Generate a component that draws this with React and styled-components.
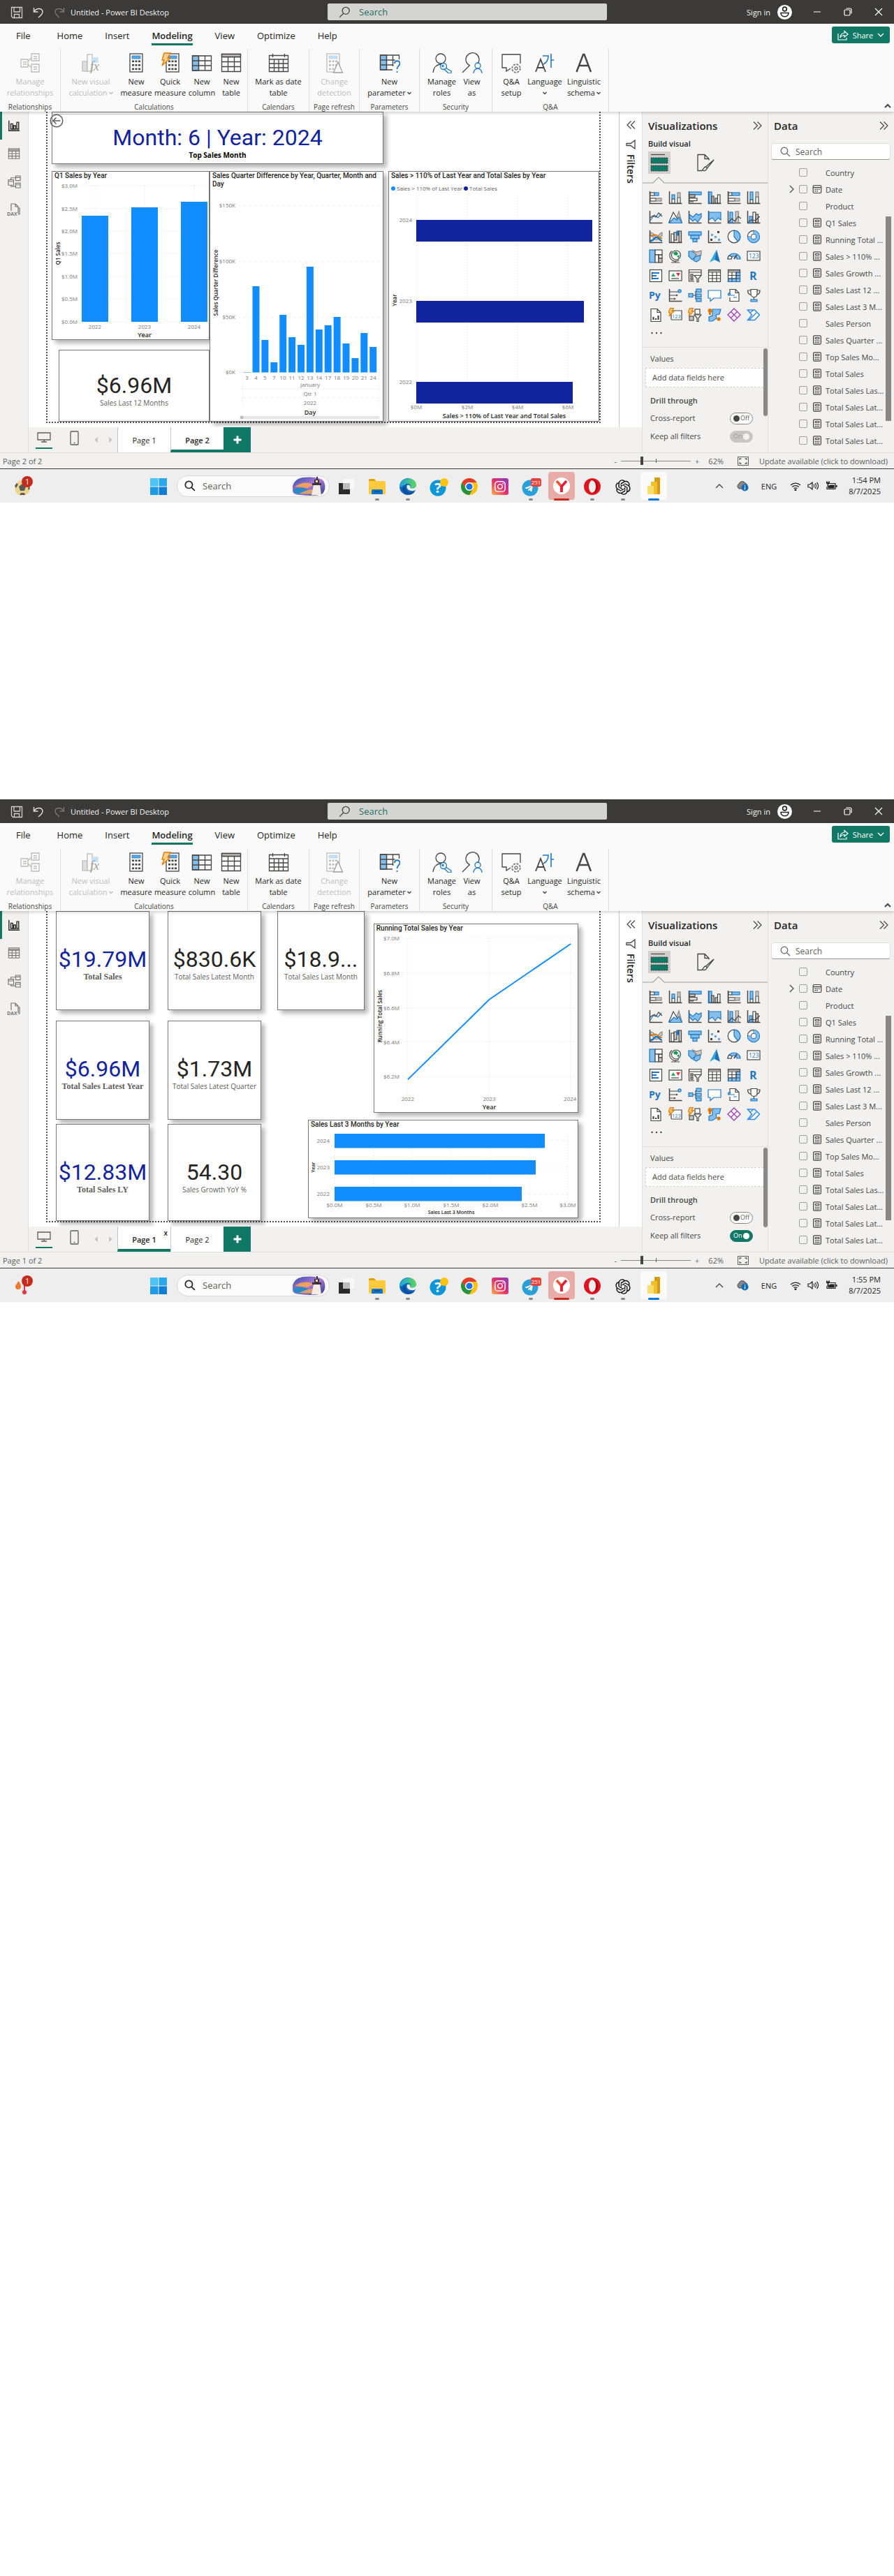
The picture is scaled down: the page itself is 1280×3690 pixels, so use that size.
import React from 'react';
import styled, { createGlobalStyle, css } from 'styled-components';
import { RiOpenaiFill } from 'react-icons/ri';
import { FaInstagram, FaTelegramPlane } from 'react-icons/fa';

/* ---------- tokens ---------- */
const ui = '"Open Sans", "Noto Sans", sans-serif';
const din = 'Roboto, "Open Sans", sans-serif';
const c = {
  green: '#117865',
  blue: '#118dff',
  navy: '#12239e',
  panel: '#f2f1f0',
  line: '#e1dfdd',
  text: '#252423',
  mid: '#484644',
  soft: '#605e5c',
  off: '#bebcba',
};

const Global = createGlobalStyle`
  * { box-sizing: border-box; }
  body { margin: 0; background: #fff; font-family: ${ui}; color: ${c.text}; }
  button, input { font: inherit; color: inherit; }
  button { border: 0; padding: 0; background: none; }
  h2, h3, p { margin: 0; }
  svg { display: block; }
`;

const Document = styled.main`
  display: flex;
  flex-direction: column;
  gap: 425px;
`;
const Desktop = styled.section`
  display: flex;
  flex-direction: column;
`;

/* ---------- title bar ---------- */
const TitleBar = styled.header`
  display: grid;
  grid-template-columns: 469fr 400fr 411fr;
  align-items: center;
  height: 34px;
  background: #3b3a38;
  color: #f3f2f1;
  font-size: 11px;
`;
const TitleLeft = styled.div`
  display: flex;
  align-items: center;
  gap: 14px;
  padding: 2px 0 0 15px;
`;
const TitleText = styled.span`
  margin-left: -6px;
  line-height: 16px;
`;
const TitleSearch = styled.label`
  display: flex;
  align-items: center;
  gap: 12px;
  height: 24px;
  padding-left: 16px;
  border-radius: 2px;
  background: #d4d4d2;
  color: #1f5c4e;
  font-size: 13px;
`;
const BareInput = styled.input`
  flex: 1;
  min-width: 0;
  border: 0;
  padding: 0;
  outline: 0;
  background: transparent;
  &::placeholder { color: ${(p) => p.$ink || '#1f6f5c'}; opacity: 1; }
`;
const TitleRight = styled.div`
  display: flex;
  align-items: center;
  justify-content: flex-end;
  padding-right: 15px;
`;
const SignIn = styled.button`
  display: flex;
  align-items: center;
  gap: 10px;
  margin-right: 29px;
`;
const WinButtons = styled.div`
  display: flex;
  gap: 30px;
`;

/* ---------- ribbon ---------- */
const Ribbon = styled.div`
  position: relative;
  z-index: 2;
  height: 126px;
  background: #fafafa;
  box-shadow: 0 2px 4px rgba(0, 0, 0, 0.18);
`;
const TabRow = styled.nav`
  display: flex;
  align-items: flex-start;
  height: 36px;
  padding: 0 6px 0 23px;
`;
const RibbonTab = styled.button`
  margin-right: ${(p) => (p.$wide ? 38 : 32)}px;
  padding-top: 6px;
  font-size: 13px;
  line-height: 22px;
  font-weight: ${(p) => (p.$on ? 600 : 400)};
  border-bottom: 3px solid ${(p) => (p.$on ? c.green : 'transparent')};
`;
const ShareButton = styled.button`
  display: flex;
  align-items: center;
  justify-content: center;
  gap: 6px;
  width: 83px;
  height: 24px;
  margin: 4px 0 0 auto;
  border-radius: 3px;
  background: ${c.green};
  color: #fff;
  font-size: 11px;
`;
const Groups = styled.div`
  display: flex;
  height: 90px;
`;
const Group = styled.div`
  display: flex;
  flex-direction: column;
  justify-content: space-between;
  width: ${(p) => p.$w}px;
  border-right: 1px solid ${c.line};
`;
const GroupItems = styled.div`
  display: flex;
  justify-content: center;
  padding-top: 5px;
`;
const GroupName = styled.span`
  font-size: 10px;
  line-height: 14px;
  text-align: center;
  color: ${c.mid};
`;
const Tool = styled.button`
  display: flex;
  flex-direction: column;
  align-items: center;
  gap: 4px;
  width: ${(p) => p.$w}px;
  font-size: 11px;
  line-height: 16px;
  white-space: nowrap;
  color: ${(p) => (p.disabled ? c.off : c.text)};
`;
const ToolLine = styled.span`
  display: flex;
  align-items: center;
  justify-content: center;
  gap: 2px;
  height: 16px;
`;
const Collapse = styled.button`
  margin: auto 4px 5px auto;
`;

/* ---------- body ---------- */
const Body = styled.div`
  display: flex;
  height: 488px;
`;
const Rail = styled.nav`
  display: flex;
  flex-direction: column;
  width: 41px;
  background: ${c.panel};
  border-right: 1px solid ${c.line};
`;
const RailButton = styled.button`
  display: flex;
  align-items: center;
  justify-content: center;
  height: 40px;
  padding-right: 3px;
  border-left: 3px solid ${(p) => (p.$on ? c.green : 'transparent')};
`;
const Center = styled.div`
  flex: 1;
  min-width: 0;
  display: flex;
  flex-direction: column;
`;
const CanvasRow = styled.div`
  flex: 1;
  min-height: 0;
  display: flex;
`;
const CanvasArea = styled.div`
  flex: 1;
  min-width: 0;
  padding: 0 26px 0 25px;
  overflow: hidden;
`;
const ReportPage = styled.div`
  height: 446px;
  border: dotted #55524f;
  border-width: 0 2px 2px;
`;
const FiltersStrip = styled.aside`
  display: flex;
  flex-direction: column;
  align-items: center;
  gap: 15px;
  width: 33px;
  padding-top: 13px;
  border-left: 1px solid #c8c6c4;
`;
const VerticalTitle = styled.span`
  margin-top: -8px;
  writing-mode: vertical-rl;
  font-size: 14px;
  font-weight: 600;
  line-height: 20px;
`;

/* report visuals */
const Visual = styled.article`
  display: flex;
  flex-direction: column;
  min-width: 0;
  flex: ${(p) => p.$grow || '0 0 auto'};
  height: ${(p) => (p.$h ? `${p.$h}px` : 'auto')};
  margin: ${(p) => p.$m || 0};
  border: 1px solid #7a7876;
  background: #fff;
  ${(p) => p.$shadow && css`box-shadow: 5px 5px 6px rgba(0, 0, 0, 0.28);`}
`;
const VisualTitle = styled.h3`
  padding-left: 3px;
  font: 500 10px/12px ${din};
  color: ${c.text};
`;
const Plot = styled.svg`
  width: 100%;
  height: auto;
  text { font-family: ${ui}; }
`;
const Kpi = styled(Visual)`
  align-items: center;
  padding-top: ${(p) => p.$top || 50}px;
`;
const KpiValue = styled.p`
  font: 400 32px/36px ${din};
  white-space: nowrap;
  color: ${(p) => (p.$navy ? c.navy : c.text)};
`;
const KpiName = styled.p`
  font-size: 10px;
  line-height: 14px;
  white-space: nowrap;
  color: ${c.soft};
  ${(p) => p.$serif && css`
    font-family: "Liberation Serif", serif;
    font-size: 12px;
    font-weight: 700;
  `}
  ${(p) => p.$bold && css`
    font-weight: 700;
    color: #000;
  `}
`;
const SecondPageGrid = styled.div`
  display: grid;
  grid-template-columns: 226fr 249fr 7fr 302fr;
  grid-template-rows: 75px 359px;
  grid-template-areas: "banner banner . ." "left middle . right";
  row-gap: 10px;
  padding-left: 6px;
`;
const Banner = styled(Visual)`
  grid-area: banner;
  position: relative;
  align-items: center;
`;
const BannerRule = styled.div`
  align-self: stretch;
  height: 18px;
  padding-top: 2px;
  &::before { content: ''; display: block; border-top: 1px solid #c8c6c4; }
`;
const BackButton = styled.button`
  position: absolute;
  top: 2px;
  left: -4px;
`;
const Area = styled.div`
  grid-area: ${(p) => p.$name};
  display: flex;
  flex-direction: column;
  min-width: 0;
`;
const Column = styled.div`
  display: flex;
  flex-direction: column;
  min-width: 0;
  flex: ${(p) => p.$grow};
`;
const FirstPageRow = styled.div`
  display: flex;
  gap: 23px;
  padding: 0 30px 0 12px;
`;
const KpiRow = styled.div`
  display: flex;
  gap: 26px;
  margin-bottom: ${(p) => p.$after || 0}px;
`;
const TopVisuals = styled.div`
  display: flex;
  align-items: flex-start;
  gap: 13px;
  margin-bottom: 10px;
`;

/* page tabs */
const PageBar = styled.div`
  display: flex;
  height: 36px;
  background: ${c.panel};
`;
const ViewButton = styled.button`
  display: flex;
  flex-direction: column;
  align-items: center;
  justify-content: flex-end;
  width: 24px;
  height: ${(p) => (p.$on ? 31 : 26)}px;
  margin-left: ${(p) => (p.$on ? 10 : 19)}px;
  padding-bottom: ${(p) => (p.$on ? 7 : 0)}px;
  border-bottom: ${(p) => (p.$on ? `2px solid ${c.green}` : '0')};
`;
const Arrows = styled.div`
  display: flex;
  align-items: center;
  justify-content: space-between;
  width: 26px;
  margin: 0 7px 0 17px;
`;
const PageTab = styled.button`
  display: flex;
  align-items: center;
  justify-content: center;
  position: relative;
  width: 76px;
  padding-top: ${(p) => (p.$on ? 4 : 1)}px;
  background: #fff;
  border-left: 1px solid #c8c6c4;
  border-bottom: ${(p) => (p.$on ? `4px solid ${c.green}` : '0')};
  font-size: 11px;
  font-weight: ${(p) => (p.$on ? 600 : 400)};
`;
const CloseMark = styled.span`
  position: absolute;
  top: 3px;
  right: 4px;
  font-size: 10px;
  line-height: 12px;
`;
const AddPage = styled.button`
  display: flex;
  align-items: center;
  justify-content: center;
  width: 39px;
  background: ${c.green};
`;

/* ---------- side panels ---------- */
const Panel = styled.aside`
  display: flex;
  flex-direction: column;
  width: ${(p) => p.$w}px;
  background: ${c.panel};
  border-left: 1px solid ${c.line};
`;
const PanelHead = styled.div`
  display: flex;
  align-items: center;
  justify-content: space-between;
  height: 24px;
  margin-top: 8px;
  padding: 0 8px;
`;
const PanelTitle = styled.h2`
  font-size: 15px;
  line-height: 24px;
  font-weight: 600;
`;
const SubTitle = styled.h3`
  padding-left: 8px;
  margin: 6px 0 3px;
  font-size: 11px;
  line-height: 16px;
  font-weight: 600;
`;
const ModeRow = styled.div`
  display: flex;
  gap: 34px;
  padding-left: 8px;
`;
const ModeButton = styled.button`
  display: flex;
  align-items: center;
  justify-content: center;
  width: 32px;
  height: 32px;
  background: ${(p) => (p.$on ? '#d2d0ce' : 'transparent')};
`;
const IconGrid = styled.div`
  display: grid;
  grid-template-columns: repeat(6, 28px);
  grid-auto-rows: 28px;
  padding-left: 5px;
  button { display: flex; align-items: center; justify-content: center; }
`;
const MoreButton = styled.button`
  align-self: flex-start;
  margin: 5px 0 0 12px;
  height: 12px;
`;
const FieldsSection = styled.div`
  flex: 1;
  display: flex;
  margin-top: 15px;
  border-top: 1px solid ${c.line};
`;
const Fields = styled.div`
  flex: 1;
  padding: 8px 0 0 4px;
  font-size: 11px;
  line-height: 16px;
  color: ${c.mid};
`;
const FieldLabel = styled.p`
  padding: ${(p) => (p.$strong ? '11px 7px 9px' : '0 7px 5px')};
  font-weight: ${(p) => (p.$strong ? 600 : 400)};
`;
const DropWell = styled.div`
  height: 28px;
  padding: 5px 9px;
  border: 1px dashed #d2d0ce;
  border-right: 0;
  background: #fff;
`;
const SwitchRow = styled.label`
  display: flex;
  align-items: center;
  justify-content: space-between;
  height: 16px;
  margin-bottom: 10px;
  padding: 0 15px 0 7px;
`;
const Switch = styled.span`
  display: flex;
  align-items: center;
  justify-content: space-between;
  flex-direction: ${(p) => (p.$on ? 'row-reverse' : 'row')};
  position: relative;
  width: 33px;
  height: 17px;
  padding: 0 4px;
  border: 1px solid ${(p) => p.$edge};
  border-radius: 9px;
  background: ${(p) => p.$fill};
  color: ${(p) => p.$ink};
  font-size: 9px;
  &::before {
    content: '';
    width: 9px;
    height: 9px;
    border-radius: 50%;
    background: ${(p) => p.$knob};
  }
  input { position: absolute; inset: 0; margin: 0; opacity: 0; }
`;
const Thumb = styled.div`
  width: ${(p) => p.$w}px;
  height: ${(p) => p.$h}px;
  margin-top: ${(p) => p.$top}px;
  margin-right: ${(p) => p.$right || 0}px;
  border-radius: ${(p) => p.$r || 0}px;
  background: #8a8886;
`;
const DataSearch = styled.label`
  display: flex;
  align-items: center;
  gap: 7px;
  height: 24px;
  margin: 13px 5px 6px 4px;
  padding-left: 12px;
  border: 1px solid ${c.line};
  border-bottom-color: #979593;
  border-radius: 4px;
  background: #fff;
  font-size: 12px;
`;
const DataBody = styled.div`
  display: flex;
`;
const FieldList = styled.ul`
  flex: 1;
  min-width: 0;
  margin: 0;
  padding: 0 0 0 30px;
  list-style: none;
`;
const FieldRow = styled.li`
  display: grid;
  grid-template-columns: 14px 19px 1fr;
  align-items: center;
  height: 24px;
  label {
    display: grid;
    grid-template-columns: 19px 1fr;
    align-items: center;
    font-size: 11px;
    white-space: nowrap;
    color: ${c.mid};
  }
`;
const Tick = styled.input`
  appearance: none;
  width: 12px;
  height: 12px;
  margin: 0;
  border: 1px solid #a19f9d;
  border-radius: 2px;
`;

/* ---------- status bar ---------- */
const StatusBar = styled.footer`
  display: flex;
  align-items: center;
  height: 24px;
  padding: 0 4px;
  background: ${c.panel};
  border-top: 1px solid ${c.line};
  border-bottom: 1px solid #3b3a38;
  font-size: 11px;
  color: ${c.soft};
`;
const ZoomGroup = styled.div`
  display: flex;
  align-items: center;
  gap: 6px;
  margin-left: auto;
  padding-right: 5px;
`;
const ZoomSlider = styled.input`
  appearance: none;
  width: 100px;
  height: 12px;
  margin: 0;
  background:
    linear-gradient(${c.soft}, ${c.soft}) 50px 50% / 1px 6px no-repeat,
    linear-gradient(#8a8886, #8a8886) 0 50% / 100% 1px no-repeat;
  &::-webkit-slider-thumb {
    appearance: none;
    width: 4px;
    height: 12px;
    background: ${c.mid};
  }
`;
const Percent = styled.span`
  margin: 0 14px 0 7px;
`;
const UpdateLink = styled.a`
  margin-left: 9px;
  color: inherit;
  text-decoration: none;
`;

/* ---------- task bar ---------- */
const TaskBar = styled.footer`
  display: grid;
  grid-template-columns: 205fr 753fr 322fr;
  align-items: center;
  height: 48px;
  background: #eeeeee;
`;
const WidgetButton = styled.button`
  justify-self: start;
  margin-left: 19px;
`;
const Apps = styled.div`
  display: flex;
  align-items: center;
`;
const AppButton = styled.button`
  display: flex;
  flex-direction: column;
  align-items: center;
  justify-content: space-between;
  width: 44px;
  height: 41px;
  padding-top: 9px;
`;
const AppTile = styled.span`
  display: flex;
  align-items: center;
  justify-content: center;
  width: 38px;
  height: 40px;
  margin-top: -9px;
  margin-bottom: -6px;
  border-radius: 4px;
  background: ${(p) => p.$bg};
`;
const Running = styled.i`
  width: ${(p) => p.$w || 6}px;
  height: 3px;
  border-radius: 2px;
  background: ${(p) => p.$bg || '#8a8886'};
  z-index: 1;
`;
const TaskSearch = styled.label`
  display: flex;
  align-items: center;
  width: 219px;
  height: 31px;
  margin: 0 2px 0 4px;
  padding: 0 4px 0 10px;
  border: 1px solid #d8d8d8;
  border-radius: 16px;
  background: #fbfbfb;
  font-size: 13px;
  gap: 10px;
`;
const Tray = styled.div`
  display: flex;
  align-items: center;
  justify-content: flex-end;
  padding-right: 19px;
  gap: 9px;
`;
const HiddenIcons = styled.button`
  margin-right: 8px;
`;
const Lang = styled.span`
  margin: 0 10px 0 8px;
  font-size: 11px;
`;
const Clock = styled.time`
  margin-left: 7px;
  font-size: 11px;
  line-height: 16px;
  text-align: right;
`;

/* ---------- icon primitives ---------- */
const K = '#484644';
const B = '#83beec';
const D = '#1f78c1';
const G = '#c8c6c4';
const Ico = ({ s = 20, v = 20, children }) => (
  <svg width={s} height={s} viewBox={`0 0 ${v} ${v}`} fill="none" stroke={K} strokeWidth="1.2" aria-hidden="true">
    {children}
  </svg>
);
const Axis = () => <path d="M1.5 1v17.5H19.5" strokeWidth="1.5" />;
const R = ({ x, y, w, h, f = 'none', k = K }) => <rect x={x} y={y} width={w} height={h} fill={f} stroke={k} />;
const Bolt = ({ x = 0, y = 0 }) => (
  <path transform={`translate(${x} ${y})`} d="M3.5.5h5L6.3 4.6h3L2 12l1.6-5H.8z" fill="#f8c471" stroke="#e07800" strokeWidth="1.1" />
);

const Chevron = ({ w = 8, d = 'M1 1l3 3 3-3', h = 5, k = K, sw = 1.4 }) => (
  <svg width={w} height={h} viewBox={`0 0 ${w} ${h}`} fill="none" stroke={k} strokeWidth={sw} aria-hidden="true">
    <path d={d} />
  </svg>
);
const DoubleChevron = ({ left }) => (
  <svg width="13" height="12" viewBox="0 0 13 12" fill="none" stroke={K} strokeWidth="1.2" aria-hidden="true">
    <path d={left ? 'M6.5.5L1 6l5.5 5.5M12 .5L6.5 6l5.5 5.5' : 'M1 .5L6.5 6 1 11.5M6.5.5L12 6l-5.5 5.5'} />
  </svg>
);
const Lens = ({ s = 15, k = K, flip, sw = 1.2 }) => (
  <svg width={s} height={s} viewBox="0 0 15 15" fill="none" stroke={k} strokeWidth={sw} aria-hidden="true">
    {flip ? <path d="M9 1.2a4.4 4.4 0 110 8.8 4.4 4.4 0 010-8.8zM5.8 9L1 14" /> : <path d="M6 1.2a4.8 4.8 0 110 9.6 4.8 4.8 0 010-9.6zM9.4 9.6L14 14" />}
  </svg>
);

/* ---------- ribbon drawings (30 x 30) ---------- */
const Draw = ({ children, dim }) => (
  <svg width="30" height="30" viewBox="0 0 30 30" fill="none" stroke={dim ? '#bebcba' : '#484644'} strokeWidth="1.3" aria-hidden="true">
    {children}
  </svg>
);
const CalcBody = ({ x = 0, dim }) => (
  <g transform={`translate(${x} 0)`}>
    <rect x="6" y="2" width="18" height="26" fill="#fff" />
    <rect x="9" y="5" width="12" height="4" fill={dim ? '#c7e0f4' : '#5ea9e3'} stroke={dim ? '#b5d0e6' : D} strokeWidth=".8" />
    {[12.5, 18, 23.5].map((y) => [9, 13.5, 18].map((cx) => (
      <rect key={`${cx}${y}`} x={cx} y={y - 1} width="3" height="2.6" fill={dim ? '#bebcba' : K} stroke="none" />
    )))}
  </g>
);
const ribbonArt = {
  relations: (
    <Draw dim><path d="M2 10h10v11H2zM17 2h11v10H17zM17 17h11v11H17zM12 13l5-5M12 17l5 5M5 14h5M5 17h5M20 6h5M20 9h5M20 21h5M20 24h5" /></Draw>
  ),
  visualCalc: (
    <Draw dim>
      <rect x="3" y="13" width="7" height="14" fill="#e1dfdd" />
      <rect x="10" y="3" width="7" height="24" fill="#fafafa" />
      <path d="M17 8h8v6h-8z" fill="#c7e0f4" stroke="#c7e0f4" />
      <text x="14" y="26" fontSize="18" fontStyle="italic" fontFamily="Liberation Serif, serif" fill="#a19f9d" stroke="none">fx</text>
    </Draw>
  ),
  measure: <Draw><CalcBody /></Draw>,
  quick: <Draw><CalcBody x={3} /><path d="M6 1h9l-4 7h4L3 19l3-8H3z" fill="#f8d08a" stroke="#e07800" /></Draw>,
  column: <Draw><rect x="1.5" y="5" width="9" height="21" fill={B} /><path d="M1.5 5h27v21h-27zM10.500 5v21M19.500 5v21M1.500 12h27M1.500 19h27" /></Draw>,
  table: <Draw><rect x="1.500" y="2.500" width="27" height="4" fill="#c8c6c4" /><path d="M1.500 2.500h27v25h-27zM1.500 6.500h27M1.500 13.500h27M1.500 20.500h27M10.500 6.500v21M19.500 6.500v21" /></Draw>,
  calendar: <Draw><path d="M1.500 4.500h27v23h-27zM1.500 10h27M1.500 16h27M1.500 22h27M8.500 10v17.500M15 10v17.500M21.500 10v17.500M6.500 2v5M23.500 2v5" /></Draw>,
  change: <Draw dim><CalcBody x={-2} dim /><path d="M20 14l6.500 15h-13z" fill="#fafafa" stroke="#a19f9d" /></Draw>,
  parameter: (
    <Draw>
      <rect x="1.500" y="4" width="9" height="21" fill={B} />
      <path d="M19 25H1.500V4h27v6M10.500 4v21M19.500 4v16M1.500 11h21M1.500 18h19" />
      <path d="M22 16c0-5 7.500-5 7.500 0 0 3.500-4 3.500-4 8M25.500 27v2" stroke={D} strokeWidth="1.800" />
    </Draw>
  ),
  roles: (
    <Draw>
      <circle cx="13" cy="9" r="7" /><path d="M2 29c1-8 6-12 12-12" />
      <circle cx="17" cy="20" r="4.500" stroke={D} /><circle cx="16" cy="19.500" r="1" stroke={D} /><path d="M20 22l8 5v3h-4l-6-6" stroke={D} />
    </Draw>
  ),
  viewAs: (
    <Draw>
      <path d="M12 19a9.500 9.500 0 1111-3M11 19L1 29" />
      <circle cx="23" cy="19" r="4" stroke={D} /><path d="M17 30c0-9 12-9 12 0" stroke={D} />
    </Draw>
  ),
  qna: (
    <Draw>
      <path d="M14 23l-6 4v-5H2V3h26v13" />
      <circle cx="22" cy="23" r="2" stroke="#797775" /><circle cx="22" cy="23" r="5.800" stroke="#797775" strokeDasharray="3 1.500" strokeWidth="1.800" />
    </Draw>
  ),
  language: <Draw><path d="M2 28L9 10l7 18M4.500 22h9" strokeWidth="1.800" /><path d="M12 5h8c0 6-3 10-7 12M24 2v20M24 11h4" stroke={D} strokeWidth="1.600" /></Draw>,
  schema: <Draw><path d="M4.500 28L14 3h1.500L25 28M8 19h13.500" strokeWidth="2.400" /></Draw>,
};

const ribbonGroups = [
  { name: 'Relationships', w: 87, tools: [{ art: 'relations', l: ['Manage', 'relationships'], w: 84, dim: true }] },
  {
    name: 'Calculations', w: 268, tools: [
      { art: 'visualCalc', l: ['New visual', 'calculation'], w: 82, dim: true, drop: true },
      { art: 'measure', l: ['New', 'measure'], w: 48 },
      { art: 'quick', l: ['Quick', 'measure'], w: 49 },
      { art: 'column', l: ['New', 'column'], w: 42 },
      { art: 'table', l: ['New', 'table'], w: 42 },
    ],
  },
  { name: 'Calendars', w: 88, tools: [{ art: 'calendar', l: ['Mark as date', 'table'], w: 80 }] },
  { name: 'Page refresh', w: 72, tools: [{ art: 'change', l: ['Change', 'detection'], w: 64, dim: true }] },
  { name: 'Parameters', w: 86, tools: [{ art: 'parameter', l: ['New', 'parameter'], w: 76, drop: true }] },
  { name: 'Security', w: 104, tools: [{ art: 'roles', l: ['Manage', 'roles'], w: 46 }, { art: 'viewAs', l: ['View', 'as'], w: 40 }] },
  {
    name: 'Q&A', w: 167, tools: [
      { art: 'qna', l: ['Q&A', 'setup'], w: 42 },
      { art: 'language', l: ['Language', ''], w: 54, drop: true },
      { art: 'schema', l: ['Linguistic', 'schema'], w: 58, drop: true },
    ],
  },
];

/* ---------- visual gallery ---------- */
const txt = { stroke: 'none', fill: D, fontFamily: 'Open Sans, sans-serif' };
const gallery = [
  ['Stacked bar', <><Axis /><R x={2} y={3} w={6} h={4} f="#fff" /><R x={8} y={3} w={6} h={4} f={B} k={D} /><R x={2} y={11} w={8} h={4} f="#fff" /><R x={10} y={11} w={8} h={4} f={G} k="#8a8886" /></>],
  ['Stacked column', <><Axis /><R x={5} y={12} w={4} h={6} f="#fff" /><R x={5} y={6} w={4} h={6} f={B} k={D} /><R x={13} y={10} w={4} h={8} f="#fff" /><R x={13} y={3} w={4} h={7} f={G} k="#8a8886" /></>],
  ['Clustered bar', <><Axis /><R x={2} y={2} w={17} h={4} f={B} k={D} /><R x={2} y={6} w={8} h={3.500} f={G} /><R x={2} y={11} w={11} h={3.500} f="#fff" /><path d="M2 16h6" /></>],
  ['Clustered column', <><Axis /><R x={2} y={2} w={4} h={16} f={B} k={D} /><R x={6} y={8} w={3} h={10} f={G} /><R x={11} y={11} w={3.500} h={7} f={G} /><R x={14.500} y={6} w={3.500} h={12} f="#fff" /></>],
  ['100% bar', <><Axis /><R x={2} y={3} w={5} h={4} f="#fff" /><R x={7} y={3} w={11} h={4} f={B} k={D} /><R x={2} y={11} w={9} h={4} f="#fff" /><R x={11} y={11} w={7} h={4} f={G} k="#8a8886" /></>],
  ['100% column', <><Axis /><R x={5} y={13} w={4} h={5} f="#fff" /><R x={5} y={2} w={4} h={11} f={B} k={D} /><R x={13} y={9} w={4} h={9} f="#fff" /><R x={13} y={2} w={4} h={7} f={G} k="#8a8886" /></>],
  ['Line', <><Axis /><path d="M2 15l6-8 5 4 5-6" stroke={D} /><path d="M2 11l4 -3 4 2 4-6 5 5" /></>],
  ['Area', <><path d="M9 18L15 2l4.500 16z" fill={G} stroke="#8a8886" /><path d="M1 17L7 3l6 10z" fill="#fff" /><path d="M1 18.500L8 11l4 3 3-4 4 8.500z" fill={B} stroke={D} /></>],
  ['Stacked area', <><Axis /><path d="M2 6l5 4 5-5 3 2 4-2v5l-5 7-4-4-3 3-5-5z" fill={B} stroke={D} /></>],
  ['100% area', <><Axis /><path d="M2 3h17v11l-4-3-4 5-4-5-5 3z" fill={B} stroke={D} /></>],
  ['Line and stacked column', <><Axis /><R x={4} y={3} w={4} h={15} f={B} k={D} /><R x={12} y={2} w={4.500} h={16} f={G} k="#8a8886" /><path d="M2 17l5-5 4 4 5-7 4 3" /></>],
  ['Line and clustered column', <><Axis /><R x={4} y={9} w={4} h={9} f={B} k={D} /><R x={9} y={3} w={4} h={15} f="#fff" /><R x={13} y={6} w={3.500} h={12} f={G} /><path d="M2 17l5-3 5 1 7-6" /></>],
  ['Ribbon', <><path d="M2 4c7 0 6 7 9 7s4-7 8-7v5c-4 0-4 6-8 6s-4-6-9-6z" fill={G} stroke="#8a8886" /><path d="M2 9c6 0 6-3 9-1s4 5 8 4" stroke="#e07800" strokeWidth="2" /><path d="M2 16c6 0 5-5 9-5s4 5 8 5" stroke={D} strokeWidth="2.500" /><Axis /></>],
  ['Waterfall', <><Axis /><R x={4} y={6} w={4} h={12} f="#fff" /><R x={8} y={4} w={4} h={11} f={G} /><R x={12} y={2} w={3} h={6} f={D} k={D} /><R x={15} y={2} w={3.500} h={16} f={G} /></>],
  ['Funnel', <><R x={1} y={3} w={18} h={5} f={B} k={D} /><R x={4} y={8} w={12} h={5} f={B} k={D} /><R x={7} y={13} w={6} h={4.500} f={B} k={D} /></>],
  ['Scatter', <><Axis /><path d="M4 13h3v3H4zM14 2h3v3h-3z" fill={K} stroke="none" /><path d="M5 6h3v3H5zM10 9h3v3h-3zM15 13h3v3h-3z" fill="#5ea9e3" stroke="none" /></>],
  ['Pie', <><circle cx="10" cy="10" r="8.800" fill="#fff" /><path d="M10 10V1.200a8.800 8.800 0 015.500 15.600z" fill={B} stroke={D} /></>],
  ['Donut', <><circle cx="10" cy="10" r="6.200" stroke={D} strokeWidth="6" /><circle cx="10" cy="10" r="6.200" stroke={B} strokeWidth="4" /><path d="M3.800 10A6.200 6.200 0 0110 3.800" stroke={K} strokeWidth="6" /><path d="M3.900 9.500A6.200 6.200 0 019.500 3.900" stroke="#fff" strokeWidth="4" /></>],
  ['Treemap', <><R x={1} y={1} w={8} h={18} f={B} k={D} /><R x={9} y={1} w={10} h={7} f="#fff" /><R x={9} y={8} w={5} h={11} f="#fff" /><R x={14} y={8} w={5} h={5} /><R x={14} y={13} w={5} h={6} f={G} /></>],
  ['Map', <><circle cx="11" cy="8.500" r="6.500" fill="#fff" /><path d="M7 5l4-2 3 3-2 3-4-1zM12 10l4-2-1 5z" fill="#1a9c50" stroke="none" /><path d="M5 2.500a8 8 0 0010 13M4 19h12M10 16.500V19" /></>],
  ['Filled map', <><path d="M1 3h5l3 2 2-1v7l-5 4-5-5z" fill={B} stroke={D} /><path d="M7 2l5 2 7-2v6l-5 2-3-3z" fill={G} stroke="#8a8886" /><path d="M10 11l8-2-1 6-5 3-4-2z" fill={B} stroke={D} /></>],
  ['Azure map', <><path d="M13 0.500L3 19l7-4z" fill="#2fa8e0" stroke="none" /><path d="M13 .5L18 19l-8-4z" fill="#2072b8" stroke="none" /></>],
  ['Gauge', <><path d="M1 14a9 8 0 0118 0h-5a4 4 0 00-8 0z" fill={B} stroke={D} /><path d="M1 14a9 8 0 012-5l4 2-1 3z" fill="#fff" /><path d="M10 14l4-6" strokeWidth="1.800" /></>],
  ['Card', <><R x={1} y={3} w={18} h={13} f="#fff" /><text x="3" y="13" fontSize="8.500" {...txt}>123</text></>],
  ['Multi-row card', <><R x={1.500} y={1.500} w={17} h={17} f="#fff" /><path d="M5 6h10M5 10h6M5 14h9" stroke={D} strokeWidth="1.800" /><path d="M4.500 4.500v11" /></>],
  ['KPI', <><R x={1} y={3} w={18} h={14} f="#fff" /><path d="M4 11l3-5 3 5z" fill="#2fa860" stroke="none" /><path d="M11 6h6l-3 5z" fill="#e0353a" stroke="none" /><path d="M4 14h11" /></>],
  ['Slicer', <><path d="M9 18H1.500V1.500H19V9M1.500 5H19" fill="none" /><R x={4} y={8} w={3} h={3} f={G} /><R x={4} y={13} w={3} h={3} f={G} /><path d="M9 9.500h10l-4 4.500v5h-2v-5z" fill="#fff" /></>],
  ['Table', <><R x={1.500} y={1.500} w={17} h={17} f="#fff" /><path d="M1.500 5h17M1.500 9.500h17M1.500 14h17M7 5v13.500M13 5v13.500M1.500 3h17" /></>],
  ['Matrix', <><R x={1.500} y={1.500} w={17} h={17} f="#fff" /><path d="M13 5h5.500v13.500H2V14h11z" fill={B} stroke={D} /><path d="M1.500 5h17M1.500 9.500h17M1.500 14h17M7 5v13.500M13 5v13.500M1.500 3h17" /></>],
  ['R script', <text x="4" y="16" fontSize="16" fontWeight="700" {...txt}>R</text>],
  ['Python script', <text x="0" y="15" fontSize="14" fontWeight="700" {...txt}>Py</text>],
  ['Key influencers', <><Axis /><path d="M2 5h13M2 10h9M2 15h6" /><circle cx="16" cy="4" r="2.200" fill={B} stroke={D} /><path d="M11 8.500l3 1.500-3 1.500zM8 13.500l3 1.500-3 1.500z" fill={K} stroke="none" /></>],
  ['Decomposition tree', <><path d="M6 10h5M11 4v12M11 4h2M11 16h2" /><R x={1} y={7.500} w={6} h={5} f={B} k={D} /><R x={12} y={1} w={7} h={4.500} f={B} k={D} /><R x={12} y={8} w={7} h={4.500} f={B} k={D} /><R x={12} y={14.500} w={7} h={4.500} f={B} k={D} /></>],
  ['Q&A', <path d="M1 3h18v11H9l-5 4.500V14H1z" fill="#fff" stroke={D} />],
  ['Narrative', <><path d="M4 8V1.500h8l5 5v12H4V13M12 1.500v5h5" fill="#fff" /><path d="M5 10h6M9 13h5" stroke={D} /><circle cx="3" cy="8.500" r="1.600" fill={B} stroke={D} /></>],
  ['Goals', <><path d="M6 1.500h9V8c0 6-9 6-9 0z" fill="#fff" /><path d="M6 3H1.500c0 4 2 6 5 6.500M15 3h4c0 4-2 6-5 6.500M10.500 12.500v4" /><path d="M6 16h9v3H6z" fill={B} stroke={D} /></>],
  ['Paginated report', <><path d="M3 1.500h9l5 5v13H3zM12 1.500v5h5" fill="#fff" /><path d="M6.500 17v-4M10 17v-2M13.500 17v-6" strokeWidth="2.200" /></>],
  ['Card (new)', <><path d="M4 16.500V4h15v13H4" fill="#fff" /><text x="5" y="15" fontSize="7.500" {...txt}>123</text><Bolt x={-1} y={0} /></>],
  ['Slicer (new)', <><R x={10} y={2} w={7} h={7} f="#fff" /><R x={2} y={12} w={6} h={6} f={G} /><path d="M9 10h10l-4 4.500v5h-2v-5z" fill="#fff" /><Bolt x={-1} y={0} /></>],
  ['ArcGIS', <><path d="M7 2h12l-2 7-5 1 1 5-6 4H2v-6l5-2z" fill={B} stroke={D} /><circle cx="3.500" cy="4" r="3" fill="#e07800" stroke="none" /><path d="M2 5h3v5H2z" fill="#e07800" stroke="none" /><circle cx="16" cy="16" r="2.600" fill="#e07800" stroke="none" /></>],
  ['Power Apps', <path d="M10 1l4.500 4.500L19 10l-9 9-9-9zM5.500 5.500l9 9M14.500 5.500l-9 9" fill="#fff" stroke="#a33bb5" strokeWidth="1.400" />],
  ['Power Automate', <path d="M1.500 3h10l7 7-7 7.500h-10l6-7.500zM5.500 6.500l4 -3M7 14l7-7M4 17l3-3" fill="#fff" stroke="#2f8be0" strokeWidth="1.500" />],
];

const CalcIcon = () => (
  <Ico s={14} v={14}>
    <rect x="1.600" y=".8" width="10.800" height="12.400" rx="1.500" />
    <path d="M4 3.500h6v2H4z" strokeWidth="1" />
    <path d="M3.800 8.200h1.600M6.200 8.200h1.600M8.600 8.200h1.600M3.800 10.700h1.600M6.200 10.700h1.600M8.600 10.700h1.600" strokeWidth="1.500" />
  </Ico>
);
const DateIcon = () => (
  <Ico s={14} v={14}>
    <rect x="1.200" y="1.500" width="11.600" height="11" rx="1.500" />
    <path d="M1.200 4.500h11.600" strokeWidth="1.400" />
    <path d="M3.500 7.200h1.600M6.200 7.200h1.600M8.900 7.200h1.600M3.500 9.800h1.600M6.200 9.800h1.600" strokeWidth="1.500" />
  </Ico>
);

const fieldNames = [
  ['Country'], ['Date', 'date'], ['Product'], ['Q1 Sales', 'calc'], ['Running Total ...', 'calc'],
  ['Sales > 110% ...', 'calc'], ['Sales Growth ...', 'calc'], ['Sales Last 12 ...', 'calc'],
  ['Sales Last 3 M...', 'calc'], ['Sales Person'], ['Sales Quarter ...', 'calc'], ['Top Sales Mo...', 'calc'],
  ['Total Sales', 'calc'], ['Total Sales Las...', 'calc'], ['Total Sales Lat...', 'calc'],
  ['Total Sales Lat...', 'calc'], ['Total Sales Lat...', 'calc'],
];

/* ---------- charts ---------- */
const Grid = ({ d }) => <path d={d} stroke="#dddbd9" strokeWidth="1" strokeDasharray="1 3" fill="none" />;
const Small = ({ x, y, children, end, size = 8, fill = '#777' }) => (
  <text x={x} y={y + 3} fontSize={size} fill={fill} textAnchor={end ? 'end' : 'middle'}>{children}</text>
);
const AxisName = ({ x, y, children, turn, size = turn ? 8 : 9 }) => (
  <text
    x={x} y={y + 3} fontSize={size} fontWeight="600" fill={c.text} textAnchor="middle"
    transform={turn ? `rotate(-90 ${x} ${y})` : undefined}
  >
    {children}
  </text>
);

function Q1Chart() {
  const ticks = [['$3.0M', 266], ['$2.5M', 299], ['$2.0M', 331], ['$1.5M', 363], ['$1.0M', 396], ['$0.5M', 428], ['$0.0M', 461]];
  const bars = [['2022', 117, 309], ['2023', 188, 297], ['2024', 259, 289]];
  return (
    <Plot viewBox="75 258 224 228" role="img" aria-label="Q1 Sales by Year">
      {ticks.map(([t, y]) => <g key={t}><Grid d={`M117 ${y}H298`} /><Small end x={111} y={y}>{t}</Small></g>)}
      {bars.map(([t, x, y]) => (
        <g key={t}>
          <Grid d={`M${x + 19} 266V461`} />
          <rect x={x} y={y} width="38" height={461 - y} fill={c.blue} />
          <Small x={x + 19} y={468}>{t}</Small>
        </g>
      ))}
      <AxisName x={207} y={480}>Year</AxisName>
      <AxisName x={83} y={363} turn>Q1 Sales</AxisName>
    </Plot>
  );
}

function QuarterChart() {
  const days = [[3, 533], [4, 410], [5, 487], [7, 519], [10, 451], [11, 483], [12, 494], [13, 382], [14, 472], [17, 466], [18, 454], [19, 492], [20, 513], [21, 477], [24, 497]];
  return (
    <Plot viewBox="301 270 247 333" role="img" aria-label="Sales Quarter Difference by day">
      {[['$150K', 294], ['$100K', 374], ['$50K', 454], ['$0K', 533]].map(([t, y]) => (
        <g key={t}><Grid d={`M343 ${y}H544`} /><Small end x={337} y={y}>{t}</Small></g>
      ))}
      {days.map(([d, y], i) => {
        const x = 348.600 + i * 12.900;
        return (
          <g key={d}>
            <rect x={x} y={y} width="10" height={533.500 - y} fill={c.blue} />
            <Small x={x + 5} y={541}>{d}</Small>
          </g>
        );
      })}
      <Grid d="M347 533V583M542 533V583M347 557H542M347 570H542" />
      <Small x={444} y={551}>January</Small>
      <Small x={444} y={564}>Qtr 1</Small>
      <Small x={444} y={577}>2022</Small>
      <AxisName x={444} y={591}>Day</AxisName>
      <rect x="345" y="596" width="199" height="4" rx="2" fill="#e6e6e6" />
      <circle cx="346" cy="598" r="2.500" fill="#bebcba" />
      <AxisName x={309} y={405} turn>Sales Quarter Difference</AxisName>
    </Plot>
  );
}

function GrowthChart() {
  return (
    <Plot viewBox="557 258 300 345" role="img" aria-label="Sales above 110% of last year and total sales">
      <circle cx="563" cy="270" r="3" fill={c.blue} />
      <text x="568" y="273" fontSize="8" fill="#605e5c">{'Sales > 110% of Last Year'}</text>
      <circle cx="667" cy="270" r="3" fill={c.navy} />
      <text x="672" y="273" fontSize="8" fill="#605e5c">Total Sales</text>
      <Grid d="M596.500 283V577M669 283V577M741 283V577M813 283V577" />
      {[['2024', 315, 848], ['2023', 431, 836], ['2022', 547, 820]].map(([t, y, x]) => (
        <g key={t}>
          <rect x="596" y={y} width={x - 596} height="31" fill={c.navy} />
          <Small end x={590} y={y}>{t}</Small>
        </g>
      ))}
      {[['0M', 596], ['2M', 669], ['4M', 741], ['6M', 813]].map(([t, x]) => <Small key={t} x={x} y={583}>{`$${t}`}</Small>)}
      <AxisName x={722} y={596}>{'Sales > 110% of Last Year and Total Sales'}</AxisName>
      <AxisName x={565} y={430} turn>Year</AxisName>
    </Plot>
  );
}

function RunningChart() {
  return (
    <Plot viewBox="535 191 292 257" role="img" aria-label="Running Total Sales by Year">
      {[['$7.0M', 199], ['$6.8M', 249], ['$6.6M', 299], ['$6.4M', 348], ['$6.2M', 398]].map(([t, y]) => (
        <g key={t}><Grid d={`M576 ${y}H822`} /><Small end x={571} y={y}>{t}</Small></g>
      ))}
      {[['2022', 583], ['2023', 700], ['2024', 816]].map(([t, x]) => (
        <g key={t}><Grid d={`M${x} 199V424`} /><Small x={x} y={430}>{t}</Small></g>
      ))}
      <path d="M583 402L700 287L817 207" stroke={c.blue} strokeWidth="2" fill="none" />
      <AxisName x={700} y={442}>Year</AxisName>
      <AxisName x={543} y={311} turn>Running Total Sales</AxisName>
    </Plot>
  );
}

function LastMonthsChart() {
  return (
    <Plot viewBox="442 472 385 127" role="img" aria-label="Sales Last 3 Months by Year">
      {[['$0.0M', 479], ['$0.5M', 535], ['$1.0M', 590], ['$1.5M', 646], ['$2.0M', 702], ['$2.5M', 758], ['$3.0M', 813]].map(([t, x]) => (
        <g key={t}><Grid d={`M${x} 482V576`} /><Small x={x} y={581}>{t}</Small></g>
      ))}
      {[['2024', 479, 780], ['2023', 517, 767], ['2022', 555, 747]].map(([t, y, x]) => (
        <g key={t}>
          <Grid d={`M479 ${y + 10}H813`} />
          <rect x="479" y={y} width={x - 479} height="20.500" fill={c.blue} />
          <Small end x={472} y={y + 10}>{t}</Small>
        </g>
      ))}
      <AxisName x={646} y={591} size={7}>Sales Last 3 Months</AxisName>
      <AxisName x={448} y={527} size={7} turn>Year</AxisName>
    </Plot>
  );
}

/* ---------- report pages ---------- */
function PageTwo() {
  return (
    <SecondPageGrid>
      <Banner $shadow>
        <BannerRule />
        <BackButton aria-label="Back">
          <svg width="20" height="20" viewBox="0 0 20 20" fill="none" stroke="#605e5c" strokeWidth="1.500"><circle cx="10" cy="10" r="8.800" /><path d="M15.500 10H5M9.500 5.500L5 10l4.500 4.500" /></svg>
        </BackButton>
        <KpiValue $navy>Month: 6 | Year: 2024</KpiValue>
        <KpiName $bold>Top Sales Month</KpiName>
      </Banner>
      <Area $name="left">
        <Visual $shadow $h={242} $m="0 0 14px">
          <VisualTitle>Q1 Sales by Year</VisualTitle>
          <Q1Chart />
        </Visual>
        <Kpi $grow="1" $top={32} $m="0 0 0 10px">
          <KpiValue>$6.96M</KpiValue>
          <KpiName>Sales Last 12 Months</KpiName>
        </Kpi>
      </Area>
      <Area $name="middle">
        <Visual $shadow $grow="1">
          <VisualTitle>Sales Quarter Difference by Year, Quarter, Month and Day</VisualTitle>
          <QuarterChart />
        </Visual>
      </Area>
      <Area $name="right">
        <Visual $grow="1">
          <VisualTitle>{'Sales > 110% of Last Year and Total Sales by Year'}</VisualTitle>
          <GrowthChart />
        </Visual>
      </Area>
    </SecondPageGrid>
  );
}

function PageOne() {
  return (
    <FirstPageRow>
      <Column $grow="294 1 0">
        <KpiRow $after={15}>
          <Kpi $shadow $grow="1 1 0" $h={142}><KpiValue $navy>$19.79M</KpiValue><KpiName $serif>Total Sales</KpiName></Kpi>
          <Kpi $shadow $grow="1 1 0" $h={142}><KpiValue>$830.6K</KpiValue><KpiName>Total Sales Latest Month</KpiName></Kpi>
        </KpiRow>
        <KpiRow $after={6}>
          <Kpi $shadow $grow="1 1 0" $h={142}><KpiValue $navy>$6.96M</KpiValue><KpiName $serif>Total Sales Latest Year</KpiName></Kpi>
          <Kpi $shadow $grow="1 1 0" $h={142}><KpiValue>$1.73M</KpiValue><KpiName>Total Sales Latest Quarter</KpiName></Kpi>
        </KpiRow>
        <KpiRow>
          <Kpi $shadow $grow="1 1 0" $h={139}><KpiValue $navy>$12.83M</KpiValue><KpiName $serif>Total Sales LY</KpiName></Kpi>
          <Kpi $shadow $grow="1 1 0" $h={139}><KpiValue>54.30</KpiValue><KpiName>Sales Growth YoY %</KpiName></Kpi>
        </KpiRow>
      </Column>
      <Column $grow="431 1 0">
        <TopVisuals>
          <Kpi $shadow $grow="124 1 0" $h={142}><KpiValue>$18.9...</KpiValue><KpiName>Total Sales Last Month</KpiName></Kpi>
          <Visual $shadow $grow="294 1 0" $h={271} $m="18px 0 0">
            <VisualTitle>Running Total Sales by Year</VisualTitle>
            <RunningChart />
          </Visual>
        </TopVisuals>
        <Visual $shadow $h={141} $m="0 0 0 44px">
          <VisualTitle>Sales Last 3 Months by Year</VisualTitle>
          <LastMonthsChart />
        </Visual>
      </Column>
    </FirstPageRow>
  );
}

/* ---------- window parts ---------- */
function AppTitleBar() {
  return (
    <TitleBar>
      <TitleLeft>
        <svg width="18" height="18" viewBox="0 0 18 18" fill="none" stroke="#d2d0ce" strokeWidth="1.300"><path d="M1.500 1.500h15v15h-13l-2-2zM5 1.500V8h8.500V1.500M5.500 16.500v-5h7v5" /></svg>
        <svg width="16" height="18" viewBox="0 0 16 18" fill="none" stroke="#e1dfdd" strokeWidth="1.400"><path d="M1.500 2v6h6M1.500 8C5 2 13 2 14 7.500c.5 3-2 5-6 8.500" /></svg>
        <svg width="16" height="18" viewBox="0 0 16 18" fill="none" stroke="#797775" strokeWidth="1.400"><path d="M14.500 2v6h-6M14.500 8C11 2 3 2 2 7.500c-.5 3 2 5 6 8.500" /></svg>
        <TitleText>Untitled - Power BI Desktop</TitleText>
      </TitleLeft>
      <TitleSearch><Lens flip s={17} /><BareInput placeholder="Search" aria-label="Search" /></TitleSearch>
      <TitleRight>
        <SignIn>
          Sign in
          <svg width="21" height="21" viewBox="0 0 21 21"><circle cx="10.500" cy="10.500" r="10.500" fill="#fff" /><g fill="none" stroke="#252423" strokeWidth="1.600"><circle cx="10.500" cy="6" r="2.900" /><path d="M5 11.500h11c0 7-11 7-11 0z" /></g></svg>
        </SignIn>
        <WinButtons>
          <button aria-label="Minimize"><svg width="14" height="14" viewBox="0 0 14 14"><path d="M2 7h10" stroke="#fff" /></svg></button>
          <button aria-label="Restore"><svg width="14" height="14" viewBox="0 0 14 14" fill="none" stroke="#fff" strokeWidth="1.200"><rect x="2" y="4" width="8" height="8" rx="1.500" /><path d="M4.500 2h5.500a2 2 0 012 2v5.500" /></svg></button>
          <button aria-label="Close"><svg width="14" height="14" viewBox="0 0 14 14"><path d="M2 2l10 10M12 2L2 12" stroke="#fff" strokeWidth="1.200" /></svg></button>
        </WinButtons>
      </TitleRight>
    </TitleBar>
  );
}

function AppRibbon() {
  return (
    <Ribbon>
      <TabRow>
        {['File', 'Home', 'Insert', 'Modeling', 'View', 'Optimize', 'Help'].map((t) => (
          <RibbonTab key={t} $on={t === 'Modeling'} $wide={t === 'File'}>{t}</RibbonTab>
        ))}
        <ShareButton>
          <svg width="16" height="15" viewBox="0 0 16 15" fill="none" stroke="#fff" strokeWidth="1.200"><path d="M1 5v9h12v-3M4 11c0-5 3-6.500 6-6.500V1.500L15 6l-5 4V7.500c-2.500 0-4.500.5-6 3.500z" /></svg>
          Share
          <Chevron w={10} h={6} d="M1 1l4 4 4-4" k="#fff" />
        </ShareButton>
      </TabRow>
      <Groups>
        {ribbonGroups.map((g) => (
          <Group key={g.name} $w={g.w}>
            <GroupItems>
              {g.tools.map((t) => (
                <Tool key={t.art} $w={t.w} disabled={t.dim}>
                  {ribbonArt[t.art]}
                  <span>
                    <ToolLine>{t.l[0]}</ToolLine>
                    <ToolLine>{t.l[1]}{t.drop && <Chevron w={6} h={5} d="M.5 1L3 3.500 5.500 1" k={t.dim ? c.off : K} />}</ToolLine>
                  </span>
                </Tool>
              ))}
            </GroupItems>
            <GroupName>{g.name}</GroupName>
          </Group>
        ))}
        <Collapse aria-label="Collapse ribbon"><Chevron w={10} h={7} d="M1 6l4-4 4 4" sw={2} /></Collapse>
      </Groups>
    </Ribbon>
  );
}

function ViewRail() {
  return (
    <Rail>
      <RailButton $on aria-label="Report view"><Ico s={18}><path d="M2 2v16h17M5 15.500V7h3v8.500zM9.500 15.500V10h3v5.500zM14.500 15.500V4.500h3v11z" stroke="#252423" strokeWidth="1.500" /></Ico></RailButton>
      <RailButton aria-label="Table view"><Ico s={18}><path d="M1.500 2h17v16h-17zM1.500 6h17M1.500 10h17M1.500 14h17M7 6v12M13 6v12M1.500 4h17" stroke="#797775" /></Ico></RailButton>
      <RailButton aria-label="Model view"><Ico s={19}><path d="M1 7h8v8H1zM12 1h7v7h-7zM12 12h7v7h-7zM1 9.500h8M12 3.500h7M12 14.500h7M5 7V4h7M5 15v2h7" stroke="#797775" /></Ico></RailButton>
      <RailButton aria-label="DAX query view"><Ico s={20}><path d="M6 12V2h6l4 4v10M12 2v4h4M16 8h2v9h-2" stroke="#797775" /><text x="0" y="19" fontSize="7" fontWeight="700" fontFamily="Open Sans, sans-serif" fill="#797775" stroke="none">DAX</text></Ico></RailButton>
    </Rail>
  );
}

function PageTabs({ page }) {
  return (
    <PageBar>
      <ViewButton $on aria-label="Desktop layout"><svg width="20" height="15" viewBox="0 0 20 15" fill="none" stroke="#605e5c" strokeWidth="1.300"><path d="M1 1h18v10H1zM10 11v3M6 14h8" /></svg></ViewButton>
      <ViewButton aria-label="Mobile layout"><svg width="13" height="21" viewBox="0 0 13 21" fill="none" stroke="#605e5c" strokeWidth="1.300"><rect x="1" y="1" width="11" height="19" rx="1" /><path d="M5.500 17.500h2" /></svg></ViewButton>
      <Arrows>
        <svg width="5" height="8" viewBox="0 0 5 8"><path d="M5 0v8L0 4z" fill="#c8c6c4" /></svg>
        <svg width="5" height="8" viewBox="0 0 5 8"><path d="M0 0v8l5-4z" fill="#c8c6c4" /></svg>
      </Arrows>
      <PageTab $on={page === 1}>Page 1{page === 1 && <CloseMark>x</CloseMark>}</PageTab>
      <PageTab $on={page === 2}>Page 2</PageTab>
      <AddPage aria-label="New page"><svg width="12" height="12" viewBox="0 0 12 12"><path d="M6 .5v11M.5 6h11" stroke="#fff" strokeWidth="3" /></svg></AddPage>
    </PageBar>
  );
}

function VisualizationsPanel({ page }) {
  const keep = page === 1
    ? { $edge: c.green, $fill: c.green, $ink: '#fff', $knob: '#fff' }
    : { $edge: '#c8c6c4', $fill: '#c8c6c4', $ink: '#a19f9d', $knob: '#f3f2f1' };
  return (
    <Panel $w={180}>
      <PanelHead><PanelTitle>Visualizations</PanelTitle><button aria-label="Collapse"><DoubleChevron /></button></PanelHead>
      <SubTitle>Build visual</SubTitle>
      <ModeRow>
        <ModeButton $on aria-label="Build visual">
          <svg width="26" height="26" viewBox="0 0 26 26" stroke={K}><path d="M1 1.500h20" strokeWidth="1.200" /><rect x="1" y="6" width="24" height="8" fill={c.green} strokeDasharray="2 1" /><rect x="1" y="17" width="24" height="8" fill={c.green} strokeDasharray="2 1" /></svg>
        </ModeButton>
        <ModeButton aria-label="Format visual">
          <svg width="26" height="26" viewBox="0 0 26 26" fill="none" stroke={K} strokeWidth="1.300"><path d="M8 24.500H2v-23h10l6 6v2M12 1.500v6h6M25 9L13.500 19l2 2zM13 19c-3 0-2 4-5 5 4 1.500 7 0 7-3" /></svg>
        </ModeButton>
      </ModeRow>
      <svg width="100%" height="20" viewBox="0 0 179 20" fill="none" stroke="#a19f9d" strokeWidth="1.200"><path d="M0 13h15l8-8 8 8h148" /></svg>
      <IconGrid>
        {gallery.map(([name, art]) => <button key={name} aria-label={name}><Ico>{art}</Ico></button>)}
      </IconGrid>
      <MoreButton aria-label="More visuals"><svg width="16" height="10" viewBox="0 0 16 10" fill={K}><circle cx="1.500" cy="6" r="1.200" /><circle cx="8" cy="6" r="1.200" /><circle cx="14.500" cy="6" r="1.200" /></svg></MoreButton>
      <FieldsSection>
        <Fields>
          <FieldLabel>Values</FieldLabel>
          <DropWell>Add data fields here</DropWell>
          <FieldLabel $strong>Drill through</FieldLabel>
          <SwitchRow>
            Cross-report
            <Switch $edge="#8a8886" $fill="#fff" $ink={c.soft} $knob={K}><input type="checkbox" />Off</Switch>
          </SwitchRow>
          <SwitchRow>
            Keep all filters
            <Switch $on {...keep}><input type="checkbox" defaultChecked disabled={page === 2} />On</Switch>
          </SwitchRow>
        </Fields>
        <Thumb $w={6} $h={page === 1 ? 114 : 97} $top={1} $r={3} />
      </FieldsSection>
    </Panel>
  );
}

function DataPanel({ page }) {
  return (
    <Panel $w={181}>
      <PanelHead><PanelTitle>Data</PanelTitle><button aria-label="Collapse"><DoubleChevron /></button></PanelHead>
      <DataSearch><Lens k="#605e5c" /><BareInput $ink="#605e5c" placeholder="Search" aria-label="Search fields" /></DataSearch>
      <DataBody>
        <FieldList>
          {fieldNames.map(([name, kind], i) => (
            <FieldRow key={i}>
              <span>{kind === 'date' && <Chevron w={7} h={12} d="M1 1l5 5-5 5" sw={1.200} />}</span>
              <Tick type="checkbox" id={`p${page}f${i}`} />
              <label htmlFor={`p${page}f${i}`}>
                <span>{kind === 'calc' && <CalcIcon />}{kind === 'date' && <DateIcon />}</span>
                {name}
              </label>
            </FieldRow>
          ))}
        </FieldList>
        <Thumb $w={8} $h={293} $top={75} $right={4} />
      </DataBody>
    </Panel>
  );
}

function Status({ page }) {
  return (
    <StatusBar>
      <span>Page {page} of 2</span>
      <ZoomGroup>
        <span>-</span>
        <ZoomSlider type="range" min="0" max="100" defaultValue="29" aria-label="Zoom" />
        <span>+</span>
        <Percent>62%</Percent>
        <svg width="16" height="13" viewBox="0 0 16 13" fill="none" stroke="#605e5c"><path d="M.5.500h15v12H.5z" /><path d="M3 5V3h2.500M10.500 3H13v2M13 8v2h-2.500M5.500 10H3V8" strokeWidth="1.300" /></svg>
        <UpdateLink href="#update">Update available (click to download)</UpdateLink>
      </ZoomGroup>
    </StatusBar>
  );
}

/* ---------- task bar drawings ---------- */
const Badge = ({ x, y }) => (
  <>
    <circle cx={x} cy={y} r="8" fill="#c42b1c" />
    <text x={x} y={y + 4} fontSize="10" fontFamily="Open Sans, sans-serif" fill="#fff" textAnchor="middle">1</text>
  </>
);
const Soccer = () => (
  <svg width="30" height="30" viewBox="0 0 30 30">
    <circle cx="13" cy="18" r="11" fill="#ecd592" />
    <path d="M13 12l5 4-2 6h-6l-2-6zM2 15l3-4 2 2-3 5zM22 13l2 6-3 2zM9 28l2-3h5l1 3z" fill="#5c5a58" />
    <Badge x={20} y={9} />
  </svg>
);
const Heat = () => (
  <svg width="30" height="30" viewBox="0 0 30 30">
    <path d="M7 9c4 4 4 6 4 8a4 4 0 01-8 0c0-3 3-4 4-8z" fill="#f2762e" />
    <path d="M14 12h4v9a4 4 0 11-4 0z" fill="#fff" stroke="#bcd6ef" />
    <circle cx="16" cy="25" r="3" fill="#e0353a" /><path d="M16 14v10" stroke="#e0353a" strokeWidth="2" />
    <Badge x={20} y={9} />
  </svg>
);
const Lighthouse = () => (
  <svg width="48" height="27" viewBox="0 0 48 27">
    <defs><linearGradient id="dusk" x1="0" y1="0" x2="1" y2="1"><stop offset="0" stopColor="#2c4fa8" /><stop offset=".5" stopColor="#b078d8" /><stop offset="1" stopColor="#2b3f86" /></linearGradient></defs>
    <path d="M8 3c8-4 28-3 34 1s6 18-1 21-30 2-37 0S-2 8 8 3z" fill="url(#dusk)" />
    <path d="M3 14c8-6 20-8 26-2l-8 4z" fill="#f0a05e" /><path d="M1 18c8-4 16-3 24 2l-12 5C5 25 1 24 1 18z" fill="#2b8ac6" /><path d="M8 24c8-2 12-6 22-6l4 7z" fill="#d9a06a" />
    <path d="M30 12h9l2 14H27z" fill="#f3ece4" /><path d="M28 9h13v3H28zM31 4h7v5h-7zM34 0h2v4h-2z" fill="#3d3440" /><path d="M33 5h3v3h-3z" fill="#ffe08a" />
  </svg>
);
const TaskView = () => (
  <svg width="24" height="24" viewBox="0 0 24 24"><path d="M7 1h16v15H7z" fill="#f8f8f8" /><path d="M1 7h16v16H1z" fill="#2b2b2b" /><path d="M7 7h10v9H7z" fill="#bdbdbd" /></svg>
);
const Folder = () => (
  <svg width="24" height="24" viewBox="0 0 24 24"><path d="M0 3a2 2 0 012-2h6l2 3H0z" fill="#e0a100" /><path d="M0 4h22a2 2 0 012 2v15a2 2 0 01-2 2H2a2 2 0 01-2-2z" fill="#ffcb3d" /><path d="M4 18a2 2 0 012-2h12a2 2 0 012 2v5H4z" fill="#1374c8" /><path d="M8 19h8" stroke="#0a4a86" strokeWidth="1.500" /></svg>
);
const Edge = () => (
  <svg width="24" height="24" viewBox="0 0 24 24">
    <defs><linearGradient id="edgeTop" x1="0" y1="0" x2="1" y2="0"><stop offset="0" stopColor="#1ba3e0" /><stop offset="1" stopColor="#5fd65a" /></linearGradient></defs>
    <circle cx="12" cy="12" r="12" fill="#1266b8" />
    <path d="M0 12C1-3 24-3 24 10c0 5-8 7-9 3 3-4-3-7-7-4-4 2-6 5-8 3z" fill="url(#edgeTop)" />
    <path d="M9 12c-2 7 6 11 13 7-4 6-13 6-17 0-2-5 1-8 4-7z" fill="#0d4f9e" />
    <path d="M11 10c-2 5 2 9 10 8l3-2v-5c-1 4-8 5-9 2 1-2-1-4-4-3z" fill="#eee" />
  </svg>
);
const Help = () => (
  <svg width="28" height="26" viewBox="0 0 28 26"><circle cx="13" cy="14" r="11.500" fill="#0e96d8" /><text x="13" y="21" fontSize="20" fontWeight="700" fontFamily="Open Sans, sans-serif" fill="#fff" textAnchor="middle">?</text><circle cx="22" cy="6" r="6" fill="#ffc20e" /></svg>
);
const Chrome = () => (
  <svg width="24" height="24" viewBox="0 0 24 24"><circle cx="12" cy="12" r="12" fill="#fbc116" /><path d="M1.600 6a12 12 0 0120.800 0H12a6 6 0 00-5.200 9z" fill="#e33b2e" /><path d="M1.600 6l5.200 9A6 6 0 0012 18l-.5 6A12 12 0 011.600 6z" fill="#229342" /><path d="M17.200 15L12 24h-1l1-6z" fill="#229342" /><circle cx="12" cy="12" r="6" fill="#fff" /><circle cx="12" cy="12" r="4.600" fill="#1a73e8" /></svg>
);
const Insta = () => (
  <svg width="24" height="24" viewBox="0 0 24 24">
    <defs><linearGradient id="insta" x1="0" y1="1" x2="1" y2="0"><stop offset="0" stopColor="#fdb04b" /><stop offset=".5" stopColor="#e1306c" /><stop offset="1" stopColor="#8a3ac8" /></linearGradient></defs>
    <rect width="24" height="24" rx="3" fill="url(#insta)" /><FaInstagram x="3" y="3" size={18} color="#fff" />
  </svg>
);
const Telegram = () => (
  <svg width="30" height="26" viewBox="0 0 30 26"><circle cx="14" cy="14" r="11.500" fill="#2a9fd8" /><FaTelegramPlane x="6" y="8" size={13} color="#fff" /><rect x="15" y="0" width="15" height="12" rx="3" fill="#e8403a" /><text x="22.500" y="9" fontSize="8" fontFamily="Open Sans, sans-serif" fill="#fff" textAnchor="middle">251</text></svg>
);
const Yandex = () => (
  <svg width="24" height="24" viewBox="0 0 24 24"><circle cx="12" cy="12" r="12" fill="#fff" /><path d="M5 5l7 8v8" fill="none" stroke="#f0552e" strokeWidth="3.600" /><path d="M19 5l-7 8v8" fill="none" stroke="#e0203a" strokeWidth="3.600" /></svg>
);
const Opera = () => (
  <svg width="24" height="24" viewBox="0 0 24 24"><circle cx="12" cy="12" r="12" fill="#e0131f" /><ellipse cx="12" cy="12" rx="5" ry="9" fill="#eee" /><path d="M12 3c3 0 8 2 8 9s-5 9-8 9c8-3 8-15 0-18z" fill="#a70014" /></svg>
);
const PowerBI = () => (
  <svg width="20" height="26" viewBox="0 0 20 26"><rect x="11" y="1" width="8" height="24" rx="1" fill="#d99a0b" /><path d="M6 7h8a1 1 0 011 1v17H6z" fill="#f0c02c" /><path d="M1 13h8a1 1 0 011 1v11H1z" fill="#f9dd6c" /></svg>
);

function Taskbar({ page, time }) {
  return (
    <TaskBar>
      <WidgetButton aria-label="Widgets">{page === 2 ? <Soccer /> : <Heat />}</WidgetButton>
      <Apps>
        <AppButton aria-label="Start"><svg width="24" height="24" viewBox="0 0 24 24"><path d="M0 0h11.500v11.500H0z" fill="#4cc2f5" /><path d="M12.500 0H24v11.500H12.500z" fill="#2ba8ec" /><path d="M0 12.500h11.500V24H0z" fill="#1f9be6" /><path d="M12.500 12.500H24V24H12.500z" fill="#0f7fd4" /></svg></AppButton>
        <TaskSearch><Lens s={16} k="#252423" sw={1.600} /><BareInput $ink="#605e5c" placeholder="Search" aria-label="Search Windows" /><Lighthouse /></TaskSearch>
        <AppButton aria-label="Task view"><TaskView /></AppButton>
        <AppButton aria-label="File Explorer"><Folder /><Running /></AppButton>
        <AppButton aria-label="Edge"><Edge /><Running /></AppButton>
        <AppButton aria-label="Get Help"><Help /></AppButton>
        <AppButton aria-label="Chrome"><Chrome /></AppButton>
        <AppButton aria-label="Instagram"><Insta /></AppButton>
        <AppButton aria-label="Telegram"><Telegram /><Running /></AppButton>
        <AppButton aria-label="Yandex"><AppTile $bg="#e8aca8"><Yandex /></AppTile><Running $w={22} $bg="#c42b1c" /></AppButton>
        <AppButton aria-label="Opera"><Opera /><Running /></AppButton>
        <AppButton aria-label="ChatGPT"><RiOpenaiFill size={26} color="#111" /><Running /></AppButton>
        <AppButton aria-label="Power BI"><AppTile $bg="#fafafa"><PowerBI /></AppTile><Running $w={16} $bg="#0078d4" /></AppButton>
      </Apps>
      <Tray>
        <HiddenIcons aria-label="Hidden icons"><Chevron w={12} h={8} d="M1 7l5-5 5 5" /></HiddenIcons>
        <svg width="20" height="16" viewBox="0 0 20 16"><path d="M5 12a4 4 0 010-7 5 5 0 019-1c3 1 4 5 1 8z" fill="#8a8886" stroke="#484644" /><circle cx="13.500" cy="10.500" r="5" fill="#0f6cbd" /><path d="M13.500 9.500v4M13.500 7.200v1.300" stroke="#fff" strokeWidth="1.300" /></svg>
        <Lang>ENG</Lang>
        <svg width="16" height="13" viewBox="0 0 16 13" fill="none" stroke="#252423" strokeWidth="1.200"><path d="M1 5a10 10 0 0114 0M3.200 7.500a7 7 0 019.600 0M5.500 9.800a4 4 0 015 0" /><circle cx="8" cy="11.800" r=".9" fill="#252423" /></svg>
        <svg width="17" height="14" viewBox="0 0 17 14" fill="none" stroke="#252423" strokeWidth="1.200"><path d="M1 5h2.500L7 2v10L3.500 9H1zM9 5c1 1 1 3 0 4M11 3.500c2 2 2 5 0 7M13.500 2c2.500 3 2.500 7 0 10" /></svg>
        <svg width="17" height="14" viewBox="0 0 17 14" fill="none" stroke="#252423" strokeWidth="1.200"><path d="M6 3.500h8v8H2V8" /><path d="M15.500 6v3" strokeWidth="2" /><path d="M7 6h5v4H4V8z" fill="#252423" /><path d="M1 3h5M2 .5v2M5 .5v2M3.500 3v5" strokeWidth="1.800" /></svg>
        <Clock>{time}<br />8/7/2025</Clock>
      </Tray>
    </TaskBar>
  );
}

function PowerBIWindow({ page, time }) {
  return (
    <Desktop>
      <AppTitleBar />
      <AppRibbon />
      <Body>
        <ViewRail />
        <Center>
          <CanvasRow>
            <CanvasArea><ReportPage>{page === 2 ? <PageTwo /> : <PageOne />}</ReportPage></CanvasArea>
            <FiltersStrip>
              <DoubleChevron left />
              <svg width="14" height="14" viewBox="0 0 14 14" fill="none" stroke={K} strokeWidth="1.300"><path d="M13 1v12L7 8.500H1v-3h6z" /></svg>
              <VerticalTitle>Filters</VerticalTitle>
            </FiltersStrip>
          </CanvasRow>
          <PageTabs page={page} />
        </Center>
        <VisualizationsPanel page={page} />
        <DataPanel page={page} />
      </Body>
      <Status page={page} />
      <Taskbar page={page} time={time} />
    </Desktop>
  );
}

export default function App() {
  return (
    <Document>
      <Global />
      <PowerBIWindow page={2} time="1:54 PM" />
      <PowerBIWindow page={1} time="1:55 PM" />
    </Document>
  );
}
